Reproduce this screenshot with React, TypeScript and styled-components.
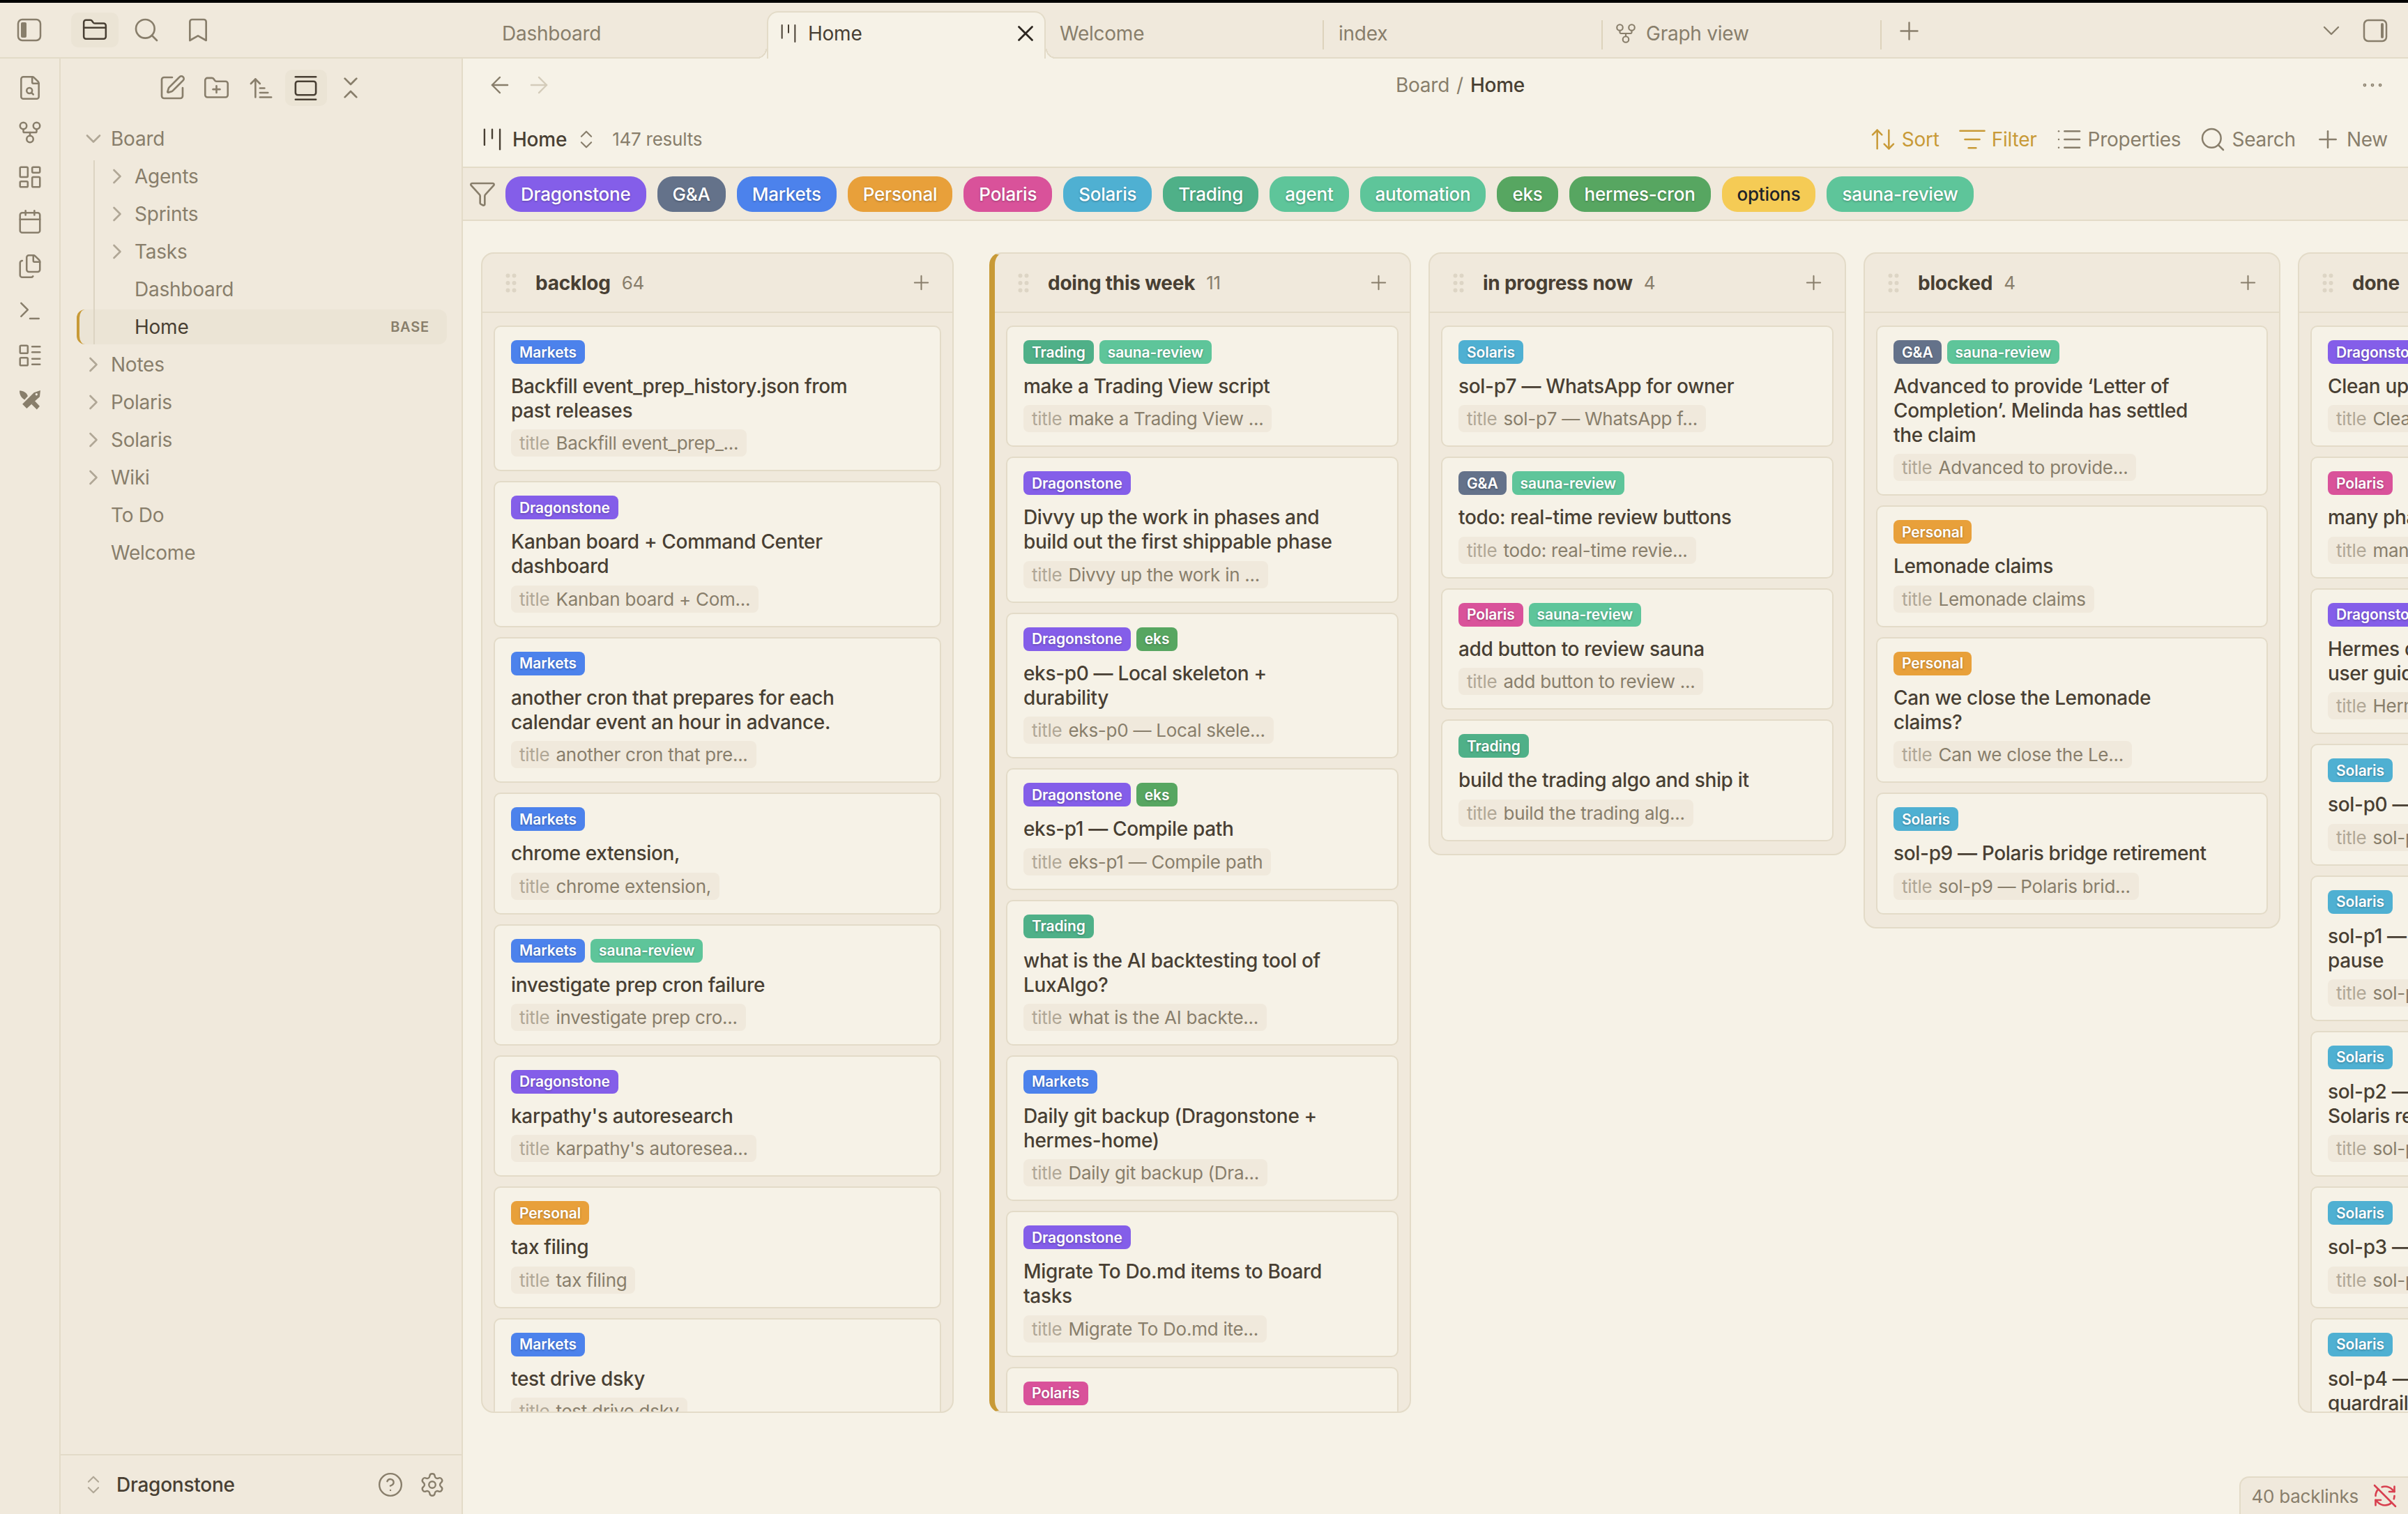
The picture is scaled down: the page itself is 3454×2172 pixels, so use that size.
import styled, { createGlobalStyle } from 'styled-components';
import {
  ArrowLeft,
  ArrowRight,
  ArrowUpDown,
  ArrowUpNarrowWide,
  Bookmark,
  Calendar,
  ChevronDown,
  ChevronRight,
  ChevronsDownUp,
  ChevronsUpDown,
  CircleHelp,
  FileSearch,
  Files,
  Filter,
  FolderClosed,
  FolderPlus,
  GalleryVertical,
  GitFork,
  GripVertical,
  Kanban,
  LayoutDashboard,
  LayoutList,
  List,
  ListFilter,
  MoreHorizontal,
  Plus,
  RefreshCwOff,
  Search,
  Settings,
  SquarePen,
  Terminal,
  X,
} from 'lucide-react';

const BG = '#f6f2e7';
const PANEL = '#f0e9dc';
const LINE = '#e3dbc8';
const INK = '#483f33';
const MUTED = '#887e6b';
const FAINT = '#b0a796';
const GOLD = '#c89a37';

const TAGS: Record<string, string> = {
  Dragonstone: '#845ee9',
  'G&A': '#64728a',
  Markets: '#4c82ec',
  Personal: '#e8a03a',
  Polaris: '#d9529a',
  Solaris: '#4fb0d2',
  Trading: '#4fb088',
  agent: '#5ec59a',
  automation: '#5ec59a',
  eks: '#57a661',
  'hermes-cron': '#57a661',
  options: '#f5cb55',
  'sauna-review': '#5ec59a',
};

const GlobalStyle = createGlobalStyle`
  html, body {
    margin: 0;
    width: 3454px;
    height: 2172px;
    overflow: hidden;
    background: ${BG};
    font-family: Inter, "Noto Sans", sans-serif;
    letter-spacing: -0.015em;
    color: ${INK};
  }
  * { box-sizing: border-box; }
  svg { display: block; flex-shrink: 0; }
`;

const Shell = styled.div`
  position: relative;
  width: 3454px;
  height: 2172px;
  border-top: 4px solid #000;
  display: flex;
  flex-direction: column;
  overflow: hidden;
`;

const TitleBar = styled.div`
  height: 80px;
  flex-shrink: 0;
  display: flex;
  background: ${PANEL};
  border-bottom: 2px solid ${LINE};
`;

const TitleLeft = styled.div`
  width: 664px;
  flex-shrink: 0;
  display: flex;
  align-items: center;
  color: ${MUTED};
  padding-left: 24px;
`;

const FolderBtn = styled.div`
  width: 68px;
  height: 50px;
  margin: 0 20px 0 42px;
  border-radius: 10px;
  background: #ebe4d5;
  color: ${INK};
  display: flex;
  align-items: center;
  justify-content: center;
`;

const SearchSlot = styled.div`
  margin-right: 34px;
`;

const TabStrip = styled.div`
  flex: 1;
  display: flex;
  align-items: flex-end;
  padding-left: 36px;
  height: 80px;
`;

const Tab = styled.div<{ $divider?: boolean }>`
  position: relative;
  width: 400px;
  height: 68px;
  padding: 0 18px 6px;
  display: flex;
  align-items: center;
  gap: 12px;
  font-size: 28px;
  color: ${MUTED};
  border: 2px solid transparent;
  border-bottom: 0;
  border-radius: 16px 16px 0 0;

  &::after {
    content: '';
    display: ${(p) => (p.$divider ? 'block' : 'none')};
    position: absolute;
    right: -1px;
    top: 11px;
    bottom: 13px;
    width: 2px;
    background: #ddd3bc;
  }
`;

const ActiveTab = styled(Tab)`
  color: ${INK};
  background: ${BG};
  border-color: ${LINE};
  z-index: 2;

  &::before,
  &::after {
    content: '';
    display: block;
    position: absolute;
    top: auto;
    bottom: 0;
    width: 14px;
    height: 14px;
  }

  &::before {
    left: -16px;
    right: auto;
    background: radial-gradient(circle at 0 0, transparent 12px, ${LINE} 12px, ${LINE} 14px, ${BG} 14px);
  }

  &::after {
    right: -16px;
    background: radial-gradient(circle at 100% 0, transparent 12px, ${LINE} 12px, ${LINE} 14px, ${BG} 14px);
  }
`;

const TabIcon = styled.div`
  margin-left: -5px;
`;

const TabClose = styled.div`
  margin-left: auto;
  margin-right: -10px;
  color: #2c2620;
`;

const TitleRight = styled.div`
  margin-left: auto;
  display: flex;
  align-items: center;
  gap: 25px;
  padding-right: 29px;
  color: ${MUTED};
  height: 80px;
`;

const AddTab = styled.div`
  align-self: center;
  margin-left: 18px;
  color: ${MUTED};
`;

const Body = styled.div`
  flex: 1;
  display: flex;
  min-height: 0;
`;

const Ribbon = styled.nav`
  width: 87px;
  flex-shrink: 0;
  padding-top: 10px;
  background: ${PANEL};
  border-right: 2px solid ${LINE};
  color: ${MUTED};
  display: flex;
  flex-direction: column;
  align-items: center;
`;

const RibbonItem = styled.div`
  height: 64px;
  display: flex;
  align-items: center;
  justify-content: center;
`;

const Sidebar = styled.aside`
  width: 577px;
  flex-shrink: 0;
  background: ${PANEL};
  border-right: 2px solid ${LINE};
  display: flex;
  flex-direction: column;
`;

const SideTools = styled.div`
  display: flex;
  justify-content: center;
  gap: 4px;
  padding-top: 16px;
  color: ${MUTED};
`;

const SideTool = styled.div<{ $on?: boolean }>`
  width: 60px;
  height: 52px;
  border-radius: 10px;
  background: ${(p) => (p.$on ? '#ebe4d5' : 'transparent')};
  color: ${(p) => (p.$on ? INK : MUTED)};
  display: flex;
  align-items: center;
  justify-content: center;
`;

const Tree = styled.div`
  margin-top: 22px;
  padding: 0 21px 0 23px;
  display: flex;
  flex-direction: column;
  gap: 4px;
`;

const TreeGroup = styled.div`
  position: relative;
  display: flex;
  flex-direction: column;
  gap: 4px;

  &::before {
    content: '';
    position: absolute;
    left: 24px;
    top: 2px;
    bottom: 0;
    width: 2px;
    background: #dcd4c2;
    z-index: 1;
  }
`;

const TreeRow = styled.div<{ $depth: number; $active?: boolean }>`
  height: 50px;
  display: flex;
  align-items: center;
  padding-left: ${(p) => (p.$active ? 8 : 12) + p.$depth * 34}px;
  padding-right: 25px;
  font-size: 28px;
  color: ${(p) => (p.$active ? INK : MUTED)};
  background: ${(p) => (p.$active ? '#ebe4d5' : 'transparent')};
  border-left: ${(p) => (p.$active ? `4px solid ${GOLD}` : '0')};
  border-radius: 12px;
`;

const TreeChevron = styled.div`
  width: 24px;
  margin-right: 13px;
  flex-shrink: 0;
  display: flex;
  justify-content: center;
  color: ${FAINT};
`;

const BaseLabel = styled.span`
  margin-left: auto;
  font-size: 20px;
  font-weight: 600;
  letter-spacing: 0.04em;
  color: ${MUTED};
`;

const SideFooter = styled.div`
  margin-top: auto;
  height: 86px;
  border-top: 2px solid ${LINE};
  padding: 0 23px 0 30px;
  display: flex;
  align-items: center;
  font-size: 28px;
  font-weight: 500;
  color: ${INK};
`;

const FooterChevron = styled.div`
  color: ${FAINT};
  margin-right: 16px;
`;

const FooterIcons = styled.div`
  margin-left: auto;
  display: flex;
  gap: 22px;
  color: ${MUTED};
`;

const Main = styled.main`
  position: relative;
  flex: 1;
  min-width: 0;
  display: flex;
  flex-direction: column;
`;

const NavRow = styled.div`
  height: 76px;
  flex-shrink: 0;
  display: flex;
  align-items: center;
  padding: 0 32px 0 34px;
  color: ${MUTED};
`;

const NavButtons = styled.div`
  display: flex;
  gap: 18px;
`;

const ForwardIcon = styled.span`
  color: #d4ccba;
`;

const Breadcrumb = styled.div`
  margin: 0 auto;
  padding-left: 13px;
  display: flex;
  gap: 10px;
  font-size: 28px;
  color: ${MUTED};

  b {
    font-weight: 500;
    color: ${INK};
  }
`;

const Toolbar = styled.div`
  height: 79px;
  flex-shrink: 0;
  display: flex;
  align-items: center;
  padding: 0 29px 0 23px;
  font-size: 28px;
`;

const ViewName = styled.div`
  display: flex;
  align-items: center;
  gap: 10px;
  font-weight: 500;
  color: ${INK};
`;

const ViewSwitch = styled.div`
  margin-left: 11px;
  color: ${MUTED};
`;

const ResultCount = styled.div`
  margin-left: 20px;
  font-size: 26px;
  color: ${MUTED};
`;

const Actions = styled.div`
  margin-left: auto;
  display: flex;
  gap: 26px;
`;

const Action = styled.div<{ $gold?: boolean }>`
  display: flex;
  align-items: center;
  gap: 7px;
  color: ${(p) => (p.$gold ? GOLD : MUTED)};
`;

const FilterRow = styled.div`
  height: 78px;
  flex-shrink: 0;
  display: flex;
  align-items: center;
  gap: 16px;
  padding-left: 8px;
  background: ${PANEL};
  border-top: 2px solid ${LINE};
  border-bottom: 2px solid ${LINE};
  color: ${MUTED};
`;

const Funnel = styled.div`
  margin-right: -3px;
`;

const Chip = styled.div<{ $color: string; $dark?: boolean }>`
  height: 51px;
  padding: 0 22px;
  border-radius: 22px;
  display: flex;
  align-items: center;
  font-size: 26px;
  font-weight: 500;
  background: ${(p) => p.$color};
  color: ${(p) => (p.$dark ? '#1f2328' : '#fff')};
  text-shadow: ${(p) => (p.$dark ? 'none' : '0 1px 3px rgba(0, 0, 0, 0.3)')};
`;

const BoardArea = styled.div`
  flex: 1;
  min-height: 0;
  display: flex;
  align-items: flex-start;
  gap: 25px;
  padding: 45px 0 145px 26px;
  overflow: hidden;
`;

const Column = styled.section<{ $w: number; $gold?: boolean; $wide?: boolean }>`
  width: ${(p) => p.$w}px;
  max-height: 100%;
  flex-shrink: 0;
  margin-right: ${(p) => (p.$wide ? 26 : 0)}px;
  display: flex;
  flex-direction: column;
  overflow: hidden;
  background: ${PANEL};
  border: 2px solid ${LINE};
  border-left: ${(p) => (p.$gold ? `8px solid ${GOLD}` : `2px solid ${LINE}`)};
  border-radius: 18px;
`;

const ColumnHead = styled.header`
  height: 85px;
  flex-shrink: 0;
  display: flex;
  align-items: center;
  padding: 0 28px 0 23px;
  border-bottom: 2px solid ${LINE};
  font-size: 28px;
`;

const Grip = styled.div`
  margin-right: 17px;
  color: #ddd5c5;
`;

const ColumnName = styled.div`
  font-weight: 700;
  color: ${INK};
`;

const ColumnCount = styled.div`
  margin-left: 16px;
  font-size: 26px;
  color: ${MUTED};
`;

const ColumnAdd = styled.div`
  margin-left: auto;
  color: ${MUTED};
`;

const CardList = styled.div`
  padding: 18px 16px;
  display: flex;
  flex-direction: column;
  gap: 14px;
  min-height: 0;
  overflow: hidden;
`;

const Card = styled.article`
  flex-shrink: 0;
  background: ${BG};
  border: 2px solid ${LINE};
  border-radius: 10px;
  padding: 19px 23px;
`;

const TagRow = styled.div`
  display: flex;
  gap: 8px;
`;

const Tag = styled.span<{ $color: string }>`
  height: 34px;
  padding: 0 12px;
  border-radius: 8px;
  display: flex;
  align-items: center;
  font-size: 21px;
  font-weight: 600;
  letter-spacing: -0.005em;
  color: #fff;
  white-space: nowrap;
  background: ${(p) => p.$color};
  text-shadow: 0 1px 3px rgba(0, 0, 0, 0.3);
`;

const CardTitle = styled.div`
  margin-top: 15px;
  font-size: 28px;
  line-height: 35px;
  font-weight: 500;
  letter-spacing: -0.012em;
  white-space: pre-line;
  color: ${INK};
`;

const Prop = styled.div`
  margin-top: 9.4px;
  width: fit-content;
  max-width: 359px;
  height: 39px;
  padding: 0 12px;
  border-radius: 8px;
  display: flex;
  align-items: center;
  gap: 9px;
  font-size: 26px;
  letter-spacing: -0.01em;
  white-space: nowrap;
  overflow: hidden;
  background: ${PANEL};
  color: ${MUTED};

  span {
    color: ${FAINT};
  }
`;

const StatusBar = styled.div`
  position: absolute;
  right: 0;
  bottom: 0;
  height: 54px;
  padding: 0 15px 0 16px;
  display: flex;
  align-items: center;
  gap: 20px;
  font-size: 26px;
  color: ${MUTED};
  background: ${PANEL};
  border-top: 2px solid ${LINE};
  border-left: 2px solid ${LINE};
  border-top-left-radius: 14px;
`;

const BrokenSync = styled.div`
  color: #d8404f;
`;

function SidebarToggle({ right }: { right?: boolean }) {
  return (
    <svg width="36" height="36" viewBox="0 0 36 36" fill="none">
      <rect x="2" y="3" width="32" height="30" rx="6" stroke="currentColor" strokeWidth="2.5" />
      <rect x={right ? 26 : 6} y="7" width={right ? 4 : 8} height="22" rx="2" fill="currentColor" />
    </svg>
  );
}

function ToolsIcon() {
  return (
    <svg width="30" height="30" viewBox="0 0 29 29" fill="currentColor">
      <path
        fillRule="evenodd"
        d="M29 1l-1 9L10 26l-6-6L20 4l9-3zM23.500 4.900a1.600 1.600 0 1 0 0 3.200 1.600 1.600 0 0 0 0-3.200z"
      />
      <path d="M0 1.500C5 1.500 10 4 11.500 9L7 14C2 11 0 7 0 1.500z" />
      <path d="M16.500 20l4.500-4.500 7 7.500-4 4.500z" />
    </svg>
  );
}

type CardData = { tags: string[]; title: string; prop: string };

const c = (tags: string, title: string, prop: string): CardData => ({
  tags: tags.split(','),
  title,
  prop,
});

const backlog = [
  c('Markets', 'Backfill event_prep_history.json from\npast releases', 'Backfill event_prep_...'),
  c('Dragonstone', 'Kanban board + Command Center\ndashboard', 'Kanban board + Com...'),
  c('Markets', 'another cron that prepares for each\ncalendar event an hour in advance.', 'another cron that pre...'),
  c('Markets', 'chrome extension,', 'chrome extension,'),
  c('Markets,sauna-review', 'investigate prep cron failure', 'investigate prep cro...'),
  c('Dragonstone', "karpathy's autoresearch", "karpathy's autoresea..."),
  c('Personal', 'tax filing', 'tax filing'),
  c('Markets', 'test drive dsky', 'test drive dsky'),
];

const doing = [
  c('Trading,sauna-review', 'make a Trading View script', 'make a Trading View ...'),
  c('Dragonstone', 'Divvy up the work in phases and\nbuild out the first shippable phase', 'Divvy up the work in ...'),
  c('Dragonstone,eks', 'eks-p0 — Local skeleton +\ndurability', 'eks-p0 — Local skele...'),
  c('Dragonstone,eks', 'eks-p1 — Compile path', 'eks-p1 — Compile path'),
  c('Trading', 'what is the AI backtesting tool of\nLuxAlgo?', 'what is the AI backte...'),
  c('Markets', 'Daily git backup (Dragonstone +\nhermes-home)', 'Daily git backup (Dra...'),
  c('Dragonstone', 'Migrate To Do.md items to Board\ntasks', 'Migrate To Do.md ite...'),
  c('Polaris', 'Polaris cleanup', 'Polaris cleanup'),
];

const inProgress = [
  c('Solaris', 'sol-p7 — WhatsApp for owner', 'sol-p7 — WhatsApp f...'),
  c('G&A,sauna-review', 'todo: real-time review buttons', 'todo: real-time revie...'),
  c('Polaris,sauna-review', 'add button to review sauna', 'add button to review ...'),
  c('Trading', 'build the trading algo and ship it', 'build the trading alg...'),
];

const blocked = [
  c('G&A,sauna-review', 'Advanced to provide ‘Letter of\nCompletion’. Melinda has settled\nthe claim', 'Advanced to provide...'),
  c('Personal', 'Lemonade claims', 'Lemonade claims'),
  c('Personal', 'Can we close the Lemonade\nclaims?', 'Can we close the Le...'),
  c('Solaris', 'sol-p9 — Polaris bridge retirement', 'sol-p9 — Polaris brid...'),
];

const done = [
  c('Dragonstone', 'Clean up old tasks', 'Clean up old tasks'),
  c('Polaris', 'many phases of work', 'many phases of work'),
  c('Dragonstone', 'Hermes docs and\nuser guide', 'Hermes docs and use...'),
  c('Solaris', 'sol-p0 — Foundations', 'sol-p0 — Foundations'),
  c('Solaris', 'sol-p1 — Kill switch and\npause', 'sol-p1 — Kill switch...'),
  c('Solaris', 'sol-p2 — Risk checks and\nSolaris review', 'sol-p2 — Risk checks...'),
  c('Solaris', 'sol-p3 — Paper trading', 'sol-p3 — Paper trading'),
  c('Solaris', 'sol-p4 — Live sizing and\nguardrails', 'sol-p4 — Live sizing...'),
];

const columns = [
  { name: 'backlog', count: 64, w: 678, wide: true, cards: backlog },
  { name: 'doing this week', count: 11, w: 605, gold: true, cards: doing },
  { name: 'in progress now', count: 4, w: 599, cards: inProgress },
  { name: 'blocked', count: 4, w: 598, cards: blocked },
  { name: 'done', count: 38, w: 600, cards: done },
];

const filterChips = [
  'Dragonstone',
  'G&A',
  'Markets',
  'Personal',
  'Polaris',
  'Solaris',
  'Trading',
  'agent',
  'automation',
  'eks',
  'hermes-cron',
  'options',
  'sauna-review',
];

const ribbonIcons = [FileSearch, GitFork, LayoutDashboard, Calendar, Files, Terminal, LayoutList];

export default function App() {
  return (
    <Shell>
      <GlobalStyle />
      <TitleBar>
        <TitleLeft>
          <SidebarToggle />
          <FolderBtn>
            <FolderClosed size={38} strokeWidth={1.6} />
          </FolderBtn>
          <SearchSlot>
            <Search size={40} strokeWidth={1.6} />
          </SearchSlot>
          <Bookmark size={40} strokeWidth={1.6} />
        </TitleLeft>
        <TabStrip>
          <Tab>Dashboard</Tab>
          <ActiveTab>
            <TabIcon>
              <Kanban size={32} strokeWidth={1.5} />
            </TabIcon>
            Home
            <TabClose>
              <X size={38} strokeWidth={1.75} />
            </TabClose>
          </ActiveTab>
          <Tab $divider>Welcome</Tab>
          <Tab $divider>index</Tab>
          <Tab $divider>
            <TabIcon>
              <GitFork size={34} strokeWidth={1.5} />
            </TabIcon>
            Graph view
          </Tab>
          <AddTab>
            <Plus size={41} strokeWidth={1.4} />
          </AddTab>
          <TitleRight>
            <ChevronDown size={40} strokeWidth={1.4} />
            <SidebarToggle right />
          </TitleRight>
        </TabStrip>
      </TitleBar>
      <Body>
        <Ribbon>
          {ribbonIcons.map((Icon, i) => (
            <RibbonItem key={i}>
              <Icon size={38} strokeWidth={1.6} />
            </RibbonItem>
          ))}
          <RibbonItem>
            <ToolsIcon />
          </RibbonItem>
        </Ribbon>
        <Sidebar>
          <SideTools>
            <SideTool>
              <SquarePen size={40} strokeWidth={1.6} />
            </SideTool>
            <SideTool>
              <FolderPlus size={39} strokeWidth={1.6} />
            </SideTool>
            <SideTool>
              <ArrowUpNarrowWide size={39} strokeWidth={1.6} />
            </SideTool>
            <SideTool $on>
              <GalleryVertical size={39} strokeWidth={1.6} />
            </SideTool>
            <SideTool>
              <ChevronsDownUp size={40} strokeWidth={1.6} />
            </SideTool>
          </SideTools>
          <Tree>
            <TreeRow $depth={0}>
              <TreeChevron>
                <ChevronDown size={36} strokeWidth={1.75} />
              </TreeChevron>
              Board
            </TreeRow>
            <TreeGroup>
              {['Agents', 'Sprints', 'Tasks'].map((name) => (
                <TreeRow $depth={1} key={name}>
                  <TreeChevron>
                    <ChevronRight size={36} strokeWidth={1.75} />
                  </TreeChevron>
                  {name}
                </TreeRow>
              ))}
              <TreeRow $depth={1}>
                <TreeChevron />
                Dashboard
              </TreeRow>
              <TreeRow $depth={1} $active>
                <TreeChevron />
                Home
                <BaseLabel>BASE</BaseLabel>
              </TreeRow>
            </TreeGroup>
            {['Notes', 'Polaris', 'Solaris', 'Wiki'].map((name) => (
              <TreeRow $depth={0} key={name}>
                <TreeChevron>
                  <ChevronRight size={36} strokeWidth={1.75} />
                </TreeChevron>
                {name}
              </TreeRow>
            ))}
            {['To Do', 'Welcome'].map((name) => (
              <TreeRow $depth={0} key={name}>
                <TreeChevron />
                {name}
              </TreeRow>
            ))}
          </Tree>
          <SideFooter>
            <FooterChevron>
              <ChevronsUpDown size={34} strokeWidth={1.5} />
            </FooterChevron>
            Dragonstone
            <FooterIcons>
              <CircleHelp size={38} strokeWidth={1.5} />
              <Settings size={38} strokeWidth={1.5} />
            </FooterIcons>
          </SideFooter>
        </Sidebar>
        <Main>
          <NavRow>
            <NavButtons>
              <ArrowLeft size={38} strokeWidth={1.5} />
              <ForwardIcon>
                <ArrowRight size={38} strokeWidth={1.5} />
              </ForwardIcon>
            </NavButtons>
            <Breadcrumb>
              Board <span>/</span> <b>Home</b>
            </Breadcrumb>
            <MoreHorizontal size={38} strokeWidth={1} />
          </NavRow>
          <Toolbar>
            <ViewName>
              <Kanban size={38} strokeWidth={1.5} />
              Home
            </ViewName>
            <ViewSwitch>
              <ChevronsUpDown size={34} strokeWidth={1.5} />
            </ViewSwitch>
            <ResultCount>147 results</ResultCount>
            <Actions>
              <Action $gold>
                <ArrowUpDown size={40} strokeWidth={1.5} />
                Sort
              </Action>
              <Action $gold>
                <ListFilter size={42} strokeWidth={1.5} />
                Filter
              </Action>
              <Action>
                <List size={40} strokeWidth={1.5} />
                Properties
              </Action>
              <Action>
                <Search size={40} strokeWidth={1.5} />
                Search
              </Action>
              <Action>
                <Plus size={40} strokeWidth={1.5} />
                New
              </Action>
            </Actions>
          </Toolbar>
          <FilterRow>
            <Funnel>
              <Filter size={40} strokeWidth={1.6} />
            </Funnel>
            {filterChips.map((name) => (
              <Chip key={name} $color={TAGS[name]} $dark={name === 'options'}>
                {name}
              </Chip>
            ))}
          </FilterRow>
          <BoardArea>
            {columns.map((col) => (
              <Column key={col.name} $w={col.w} $gold={col.gold} $wide={col.wide}>
                <ColumnHead>
                  <Grip>
                    <GripVertical size={36} strokeWidth={2} />
                  </Grip>
                  <ColumnName>{col.name}</ColumnName>
                  <ColumnCount>{col.count}</ColumnCount>
                  <ColumnAdd>
                    <Plus size={33} strokeWidth={1.5} />
                  </ColumnAdd>
                </ColumnHead>
                <CardList>
                  {col.cards.map((card) => (
                    <Card key={card.title}>
                      <TagRow>
                        {card.tags.map((t) => (
                          <Tag key={t} $color={TAGS[t]}>
                            {t}
                          </Tag>
                        ))}
                      </TagRow>
                      <CardTitle>{card.title}</CardTitle>
                      <Prop>
                        <span>title</span>
                        {card.prop}
                      </Prop>
                    </Card>
                  ))}
                </CardList>
              </Column>
            ))}
          </BoardArea>
          <StatusBar>
            40 backlinks
            <BrokenSync>
              <RefreshCwOff size={36} strokeWidth={1.75} />
            </BrokenSync>
          </StatusBar>
        </Main>
      </Body>
    </Shell>
  );
}
